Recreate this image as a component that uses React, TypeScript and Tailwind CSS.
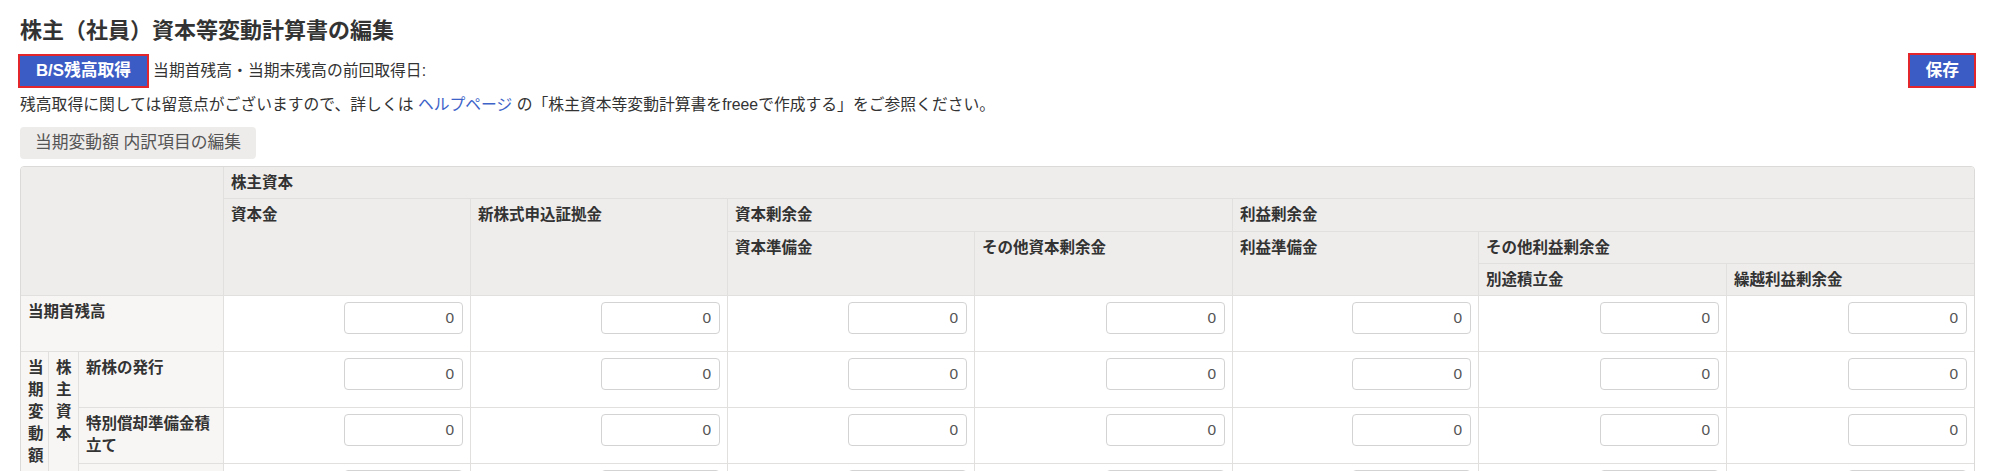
import React from "react";

const font = "font-['Liberation_Sans','Noto_Sans_CJK_JP',sans-serif]";

const columns = [28, 30, 145, 247, 257, 247, 258, 246, 248, 247];

// rows below the third are cut off by the window, their labels are not visible
const changeRows = ["新株の発行", "特別償却準備金積立て", "", ""];

const headCell = "bg-[#efedec] border-r border-b border-[#e2e0de] align-top text-left pl-[7px] pr-[6px] pt-[5px] font-bold leading-[22px]";
const labelCell = "bg-[#f7f6f5] border-r border-b border-[#e2e0de] align-top text-left px-[7px] pt-[5px] font-bold leading-[22px]";

const InputCell: React.FC<{ last?: boolean }> = ({ last }) => (
  <td
    className={`bg-white border-b border-[#e2e0de] align-top pt-[6px] pr-[7px] ${last ? "" : "border-r"}`}
  >
    <input
      readOnly
      value="0"
      className={`block ml-auto w-[119px] h-[32px] rounded-[4px] border border-[#d3d3d3] bg-white pr-[8px] text-right text-[15.5px] text-[#555] outline-none ${font}`}
    />
  </td>
);

const InputCells = () => (
  <>
    {Array.from({ length: 7 }).map((_, i) => (
      <InputCell key={i} last={i === 6} />
    ))}
  </>
);

const Vertical: React.FC<{ text: string }> = ({ text }) => (
  <>
    {text.split("").map((c, i) => (
      <span key={i} className="block">
        {c}
      </span>
    ))}
  </>
);

export default function App() {
  return (
    <div
      className={`w-[1999px] h-[471px] overflow-hidden bg-white pl-[20px] pr-[24px] pt-[16px] text-[#333] ${font}`}
    >
      {/* Title */}
      <h1 className="h-[30px] text-[22px] leading-[30px] font-bold">
        株主（社員）資本等変動計算書の編集
      </h1>

      {/* Balance fetch row */}
      <div className="mt-[7px] flex items-center justify-between">
        <div className="flex items-center">
          <button className="-ml-[2px] h-[34px] border-2 border-[#e3262b] bg-[#3b5cc5] px-[16px] text-[16.8px] font-bold text-white">
            B/S残高取得
          </button>
          <span className="ml-[4px] text-[15.8px]">
            当期首残高・当期末残高の前回取得日:
          </span>
        </div>
        <button className="-mr-[1px] h-[35px] border-2 border-[#e3262b] bg-[#3b5cc5] px-[15px] text-[16.8px] font-bold text-white">
          保存
        </button>
      </div>

      <p className="mt-[6px] text-[15.8px] leading-[22px]">
        残高取得に関しては留意点がございますので、詳しくは{" "}
        <a className="text-[#3d63c9]">ヘルプページ</a>{" "}
        の「株主資本等変動計算書をfreeeで作成する」をご参照ください。
      </p>

      <button className="mt-[11px] block h-[32px] rounded-[4px] bg-[#eeeceb] px-[15px] text-[16.8px] text-[#555]">
        当期変動額 内訳項目の編集
      </button>

      {/* Table */}
      <div className="mt-[7px] overflow-hidden rounded-[4px] border border-[#dcdad8] text-[15.5px]">
        <table className="w-full table-fixed border-separate border-spacing-0">
          <colgroup>
            {columns.map((w, i) => (
              <col key={i} style={{ width: w }} />
            ))}
          </colgroup>
          <thead>
            <tr className="h-[32px]">
              <th colSpan={3} rowSpan={4} className={headCell}></th>
              <th colSpan={7} className={`${headCell} border-r-0`}>
                株主資本
              </th>
            </tr>
            <tr className="h-[33px]">
              <th rowSpan={3} className={headCell}>
                資本金
              </th>
              <th rowSpan={3} className={headCell}>
                新株式申込証拠金
              </th>
              <th colSpan={2} className={headCell}>
                資本剰余金
              </th>
              <th colSpan={3} className={`${headCell} border-r-0`}>
                利益剰余金
              </th>
            </tr>
            <tr className="h-[32px]">
              <th rowSpan={2} className={headCell}>
                資本準備金
              </th>
              <th rowSpan={2} className={headCell}>
                その他資本剰余金
              </th>
              <th rowSpan={2} className={headCell}>
                利益準備金
              </th>
              <th colSpan={2} className={`${headCell} border-r-0`}>
                その他利益剰余金
              </th>
            </tr>
            <tr className="h-[32px]">
              <th className={headCell}>別途積立金</th>
              <th className={`${headCell} border-r-0`}>繰越利益剰余金</th>
            </tr>
          </thead>
          <tbody>
            <tr className="h-[56px]">
              <th colSpan={3} className={labelCell}>
                当期首残高
              </th>
              <InputCells />
            </tr>
            {changeRows.map((label, i) => (
              <tr key={i} className="h-[56px]">
                {i === 0 && (
                  <>
                    <th rowSpan={changeRows.length} className={labelCell}>
                      <Vertical text="当期変動額" />
                    </th>
                    <th rowSpan={changeRows.length} className={labelCell}>
                      <Vertical text="株主資本" />
                    </th>
                  </>
                )}
                <th className={labelCell}>{label}</th>
                <InputCells />
              </tr>
            ))}
          </tbody>
        </table>
      </div>
    </div>
  );
}
